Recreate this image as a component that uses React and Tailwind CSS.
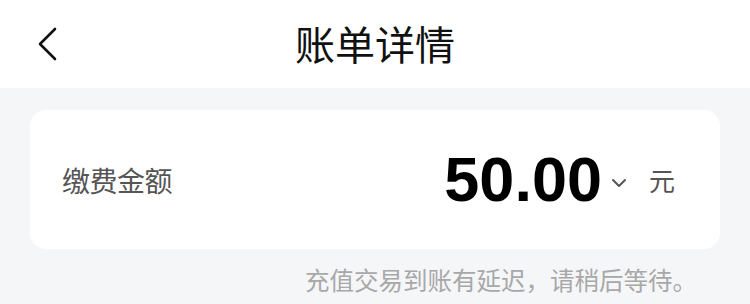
export default function App() {
  return (
    <div className="w-[750px] h-[304px] overflow-hidden bg-[#f5f6f8] font-['Noto_Sans_CJK_SC',sans-serif]">
      {/* Header */}
      <div className="relative h-[88px] bg-white flex items-center justify-center">
        <button className="absolute left-[30px] top-[26px] w-[34px] h-[36px] flex items-center justify-center">
          <svg width="22" height="34" viewBox="0 0 22 34" fill="none">
            <path d="M19 2 L4 17 L19 32" stroke="#111" strokeWidth="2.6" strokeLinecap="round" strokeLinejoin="round" />
          </svg>
        </button>
        <h1 className="text-[40px] leading-none text-[#111] font-normal mb-[2px]">账单详情</h1>
      </div>

      {/* Card */}
      <div className="mx-[30px] mt-[22px] h-[139px] bg-white rounded-[16px] flex items-center pl-[32px] pr-[45px]">
        <span className="text-[28px] leading-none text-[#555] tracking-[-0.5px]">缴费金额</span>
        <div className="ml-auto flex items-center">
          <span className="font-['Liberation_Sans',Arial,sans-serif] font-bold text-[63px] leading-none text-[#000]">50.00</span>
          <svg className="ml-[9px] mt-[6px]" width="16" height="10" viewBox="0 0 16 10" fill="none">
            <path d="M2 2 L8 8 L14 2" stroke="#555" strokeWidth="2" strokeLinecap="round" strokeLinejoin="round" />
          </svg>
          <span className="ml-[22px] text-[26px] leading-none text-[#555]">元</span>
        </div>
      </div>

      {/* Notice */}
      <p className="pl-[305px] mt-[19px] text-[24.5px] leading-none text-[#a8a8a8]">充值交易到账有延迟，请稍后等待。</p>
    </div>
  );
}
